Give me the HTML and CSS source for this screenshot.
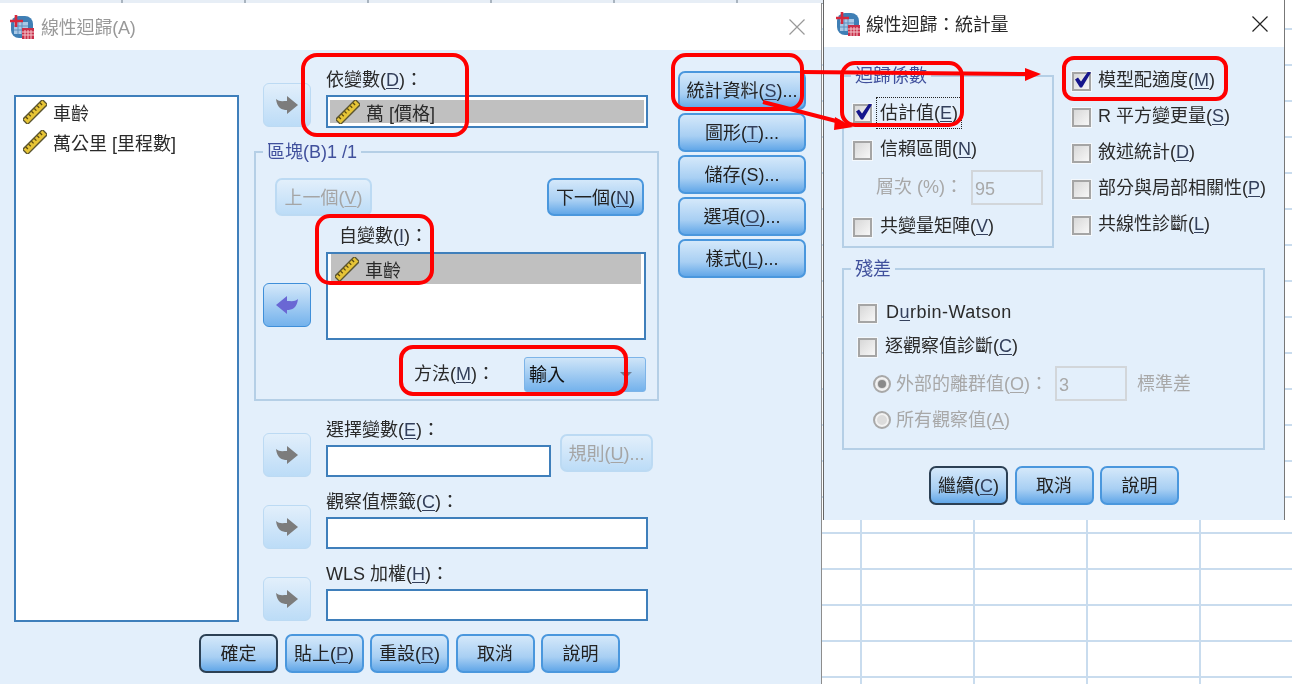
FILE: index.html
```html
<!DOCTYPE html>
<html lang="zh-Hant">
<head>
  <meta charset="UTF-8" />
  <title>線性迴歸</title>
  <link rel="stylesheet" href="styles.css">
</head>
<body>

  <svg width="0" height="0" class="defs">
    <defs>
      <symbol id="ruler" viewBox="0 0 24 24">
        <g transform="rotate(-45 12 12)">
          <rect x="-2" y="8.5" width="28" height="7" fill="#e6c436" stroke="#5b5530" stroke-width="1.4" />
          <path d="M2 9v3M6 9v3M10 9v3M14 9v3M18 9v3M22 9v3" stroke="#5b4a10" stroke-width="1.3" />
        </g>
      </symbol>
      <symbol id="app" viewBox="0 0 24 24">
        <rect x="1" y="1" width="22" height="22" rx="8" fill="#3f7fb5" />
        <rect x="4" y="7" width="14" height="12" fill="#a9c8e6" />
        <path d="M8 7v12M12 7v12M4 11h14M4 15h14" stroke="#5f8fbe" />
        <path d="M0 6h13M6 0v12" stroke="#d8283c" stroke-width="2.6" />
        <rect x="12" y="13" width="12" height="11" fill="#c9304a" />
        <path d="M15 15v9M18 15v9M21 15v9M12 17h12M12 20h12" stroke="#f3c6cc" />
      </symbol>
      <symbol id="arrow" viewBox="0 0 22 18">
        <path d="M0 3C3 6 7 5 11 5V0L22 9 11 18V14C6 14 1 12 0 3Z" />
      </symbol>
      <symbol id="x" viewBox="0 0 16 16">
        <path d="M.5 .5L15.5 15.5M15.5 .5L.5 15.5" fill="none" stroke="currentColor" stroke-width="1.2" />
      </symbol>
    </defs>
  </svg>

  <div class="desktop">
    <div class="sheet-strip"></div>

    <!-- 線性迴歸 主視窗 -->
    <section class="window window-main">
      <header class="titlebar">
        <svg class="app-icon"><use href="#app" /></svg>
        <span class="title title-off">線性迴歸(A)</span>
        <svg class="close close-off"><use href="#x" /></svg>
      </header>

      <div class="window-body">
        <div class="main-row">
          <div class="listbox source-list">
            <div class="list-item"><svg class="ruler"><use href="#ruler" /></svg>車齡</div>
            <div class="list-item"><svg class="ruler"><use href="#ruler" /></svg>萬公里 [里程數]</div>
          </div>

          <div class="center-col">
            <div class="var-row dep-row">
              <button class="arrow-btn off"><svg class="arrow"><use href="#arrow" /></svg></button>
              <div class="field">
                <div class="field-label">依變數(<u>D</u>)：</div>
                <div class="input dep-input">
                  <div class="list-item selected"><svg class="ruler"><use href="#ruler" /></svg>萬 [價格]</div>
                </div>
              </div>
            </div>

            <fieldset class="group block">
              <legend>區塊(B)1 /1</legend>
              <div class="block-nav">
                <button class="btn nav-btn off">上一個(<u>V</u>)</button>
                <button class="btn nav-btn">下一個(<u>N</u>)</button>
              </div>
              <div class="var-row indep-row">
                <button class="arrow-btn left"><svg class="arrow flip"><use href="#arrow" /></svg></button>
                <div class="field">
                  <div class="field-label indent">自變數(<u>I</u>)：</div>
                  <div class="listbox indep-list">
                    <div class="list-item selected"><svg class="ruler"><use href="#ruler" /></svg>車齡</div>
                  </div>
                </div>
              </div>
              <div class="method-row">
                <span class="method-label">方法(<u>M</u>)：</span>
                <div class="select">輸入<span class="caret"></span></div>
              </div>
            </fieldset>

            <div class="var-row sel-row">
              <button class="arrow-btn off"><svg class="arrow"><use href="#arrow" /></svg></button>
              <div class="field narrow">
                <div class="field-label">選擇變數(<u>E</u>)：</div>
                <div class="input"></div>
              </div>
              <button class="btn rule-btn off">規則(<u>U</u>)...</button>
            </div>
            <div class="var-row next-row">
              <button class="arrow-btn off"><svg class="arrow"><use href="#arrow" /></svg></button>
              <div class="field">
                <div class="field-label">觀察值標籤(<u>C</u>)：</div>
                <div class="input"></div>
              </div>
            </div>
            <div class="var-row next-row">
              <button class="arrow-btn off"><svg class="arrow"><use href="#arrow" /></svg></button>
              <div class="field">
                <div class="field-label">WLS 加權(<u>H</u>)：</div>
                <div class="input"></div>
              </div>
            </div>
          </div>

          <div class="side-col">
            <button class="btn side-btn">統計資料(<u>S</u>)...</button>
            <button class="btn side-btn">圖形(<u>T</u>)...</button>
            <button class="btn side-btn">儲存(S)...</button>
            <button class="btn side-btn">選項(<u>O</u>)...</button>
            <button class="btn side-btn">樣式(<u>L</u>)...</button>
          </div>
        </div>

        <div class="footer footer-main">
          <button class="btn default">確定</button>
          <button class="btn">貼上(<u>P</u>)</button>
          <button class="btn">重設(<u>R</u>)</button>
          <button class="btn">取消</button>
          <button class="btn">說明</button>
        </div>
      </div>
    </section>

    <!-- 統計量 對話框 -->
    <section class="window window-stats">
      <header class="titlebar stats-title">
        <svg class="app-icon"><use href="#app" /></svg>
        <span class="title">線性迴歸：統計量</span>
        <svg class="close"><use href="#x" /></svg>
      </header>

      <div class="window-body stats-body">
        <div class="stats-top">
          <fieldset class="group coef">
            <legend>迴歸係數</legend>
            <div class="check-row first">
              <span class="checkbox checked"></span><span class="check-text focus">估計值(<u>E</u>)</span>
            </div>
            <div class="check-row">
              <span class="checkbox"></span><span class="check-text">信賴區間(<u>N</u>)</span>
            </div>
            <div class="level-row disabled">
              <span class="level-label">層次 (%)：</span>
              <div class="num-input">95</div>
            </div>
            <div class="check-row">
              <span class="checkbox"></span><span class="check-text">共變量矩陣(<u>V</u>)</span>
            </div>
          </fieldset>

          <div class="fit-col">
            <div class="fit-row"><span class="checkbox checked"></span><span class="check-text">模型配適度(<u>M</u>)</span></div>
            <div class="fit-row"><span class="checkbox"></span><span class="check-text">R 平方變更量(<u>S</u>)</span></div>
            <div class="fit-row"><span class="checkbox"></span><span class="check-text">敘述統計(<u>D</u>)</span></div>
            <div class="fit-row"><span class="checkbox"></span><span class="check-text">部分與局部相關性(<u>P</u>)</span></div>
            <div class="fit-row"><span class="checkbox"></span><span class="check-text">共線性診斷(<u>L</u>)</span></div>
          </div>
        </div>

        <fieldset class="group resid">
          <legend>殘差</legend>
          <div class="check-row first-resid">
            <span class="checkbox"></span><span class="check-text dw">D<u>u</u>rbin-Watson</span>
          </div>
          <div class="check-row">
            <span class="checkbox"></span><span class="check-text">逐觀察值診斷(<u>C</u>)</span>
          </div>
          <div class="radio-row disabled tall">
            <span class="radio on"></span><span class="radio-text">外部的離群值(<u>O</u>)：</span>
            <div class="num-input">3</div>
            <span class="unit">標準差</span>
          </div>
          <div class="radio-row disabled">
            <span class="radio"></span><span class="radio-text">所有觀察值(<u>A</u>)</span>
          </div>
        </fieldset>

        <div class="footer footer-stats">
          <button class="btn default">繼續(<u>C</u>)</button>
          <button class="btn">取消</button>
          <button class="btn">說明</button>
        </div>
      </div>
    </section>

    <!-- 紅色標註 -->
    <svg class="marks" viewBox="0 0 1292 684">
      <g fill="none" stroke="#f00" stroke-width="4">
        <rect x="303" y="55" width="164" height="80" rx="14" />
        <rect x="317" y="216" width="115" height="67" rx="13" />
        <rect x="401" y="347" width="225" height="47" rx="12" />
        <rect x="673" y="55" width="129" height="54" rx="13" />
        <rect x="842" y="63" width="120" height="62" rx="13" />
        <rect x="1064" y="58" width="162" height="41" rx="10" />
        <path d="M802 72L1028 74M763 102L840 122" />
      </g>
      <path d="M1025 68L1041 74 1025 81ZM835 117L853 127 834 130Z" fill="#f00" />
    </svg>
  </div>

</body>
</html>
```

FILE: styles.css
```css
* {
  box-sizing: border-box;
}

body {
  margin: 0;
  overflow: hidden;
  font-family: "Liberation Sans", "Noto Sans CJK TC", sans-serif;
  font-size: 18px;
  color: #2a2a2a;
}

.defs {
  position: absolute;
}

u {
  text-underline-offset: 2px;
  color: #34405c;
}

/* 桌面與工作表格線 */
.desktop {
  position: relative;
  width: 1292px;
  height: 684px;
  overflow: hidden;
  filter: blur(0.35px);
  background-color: #fff;
  background-image:
    repeating-linear-gradient(180deg, transparent 0 34px, #c9dcee 34px 36px),
    repeating-linear-gradient(90deg, transparent 0 111px, #c9dcee 111px 113px);
  background-position: 0 -6px, 71px 0;
}

.sheet-strip {
  position: absolute;
  left: 0;
  top: 0;
  width: 824px;
  height: 4px;
  background-color: #e7eef6;
  background-image: repeating-linear-gradient(90deg, transparent 0 121px, #a9b4bf 121px 123px);
  border-bottom: 1px solid #9aa4ae;
}

.window {
  position: absolute;
  background-color: #e3effb;
}

.window-main {
  left: 0;
  top: 3px;
  width: 822px;
  height: 681px;
  border-right: 1px solid #8d8d8d;
}

.window-stats {
  left: 823px;
  top: 0;
  width: 462px;
  height: 520px;
  border-left: 1px solid #666;
  border-right: 1px solid #777;
}

.titlebar {
  display: flex;
  align-items: center;
  height: 47px;
  padding-left: 10px;
  background-color: #fff;
}

.stats-title {
  padding-left: 12px;
}

.stats-title .app-icon {
  margin-right: 6px;
}

.app-icon {
  width: 24px;
  height: 24px;
  margin-right: 7px;
}

.title {
  flex: 1;
  padding-bottom: 2px;
  letter-spacing: -0.2px;
}

.title-off {
  color: #999;
}

.close {
  width: 16px;
  height: 16px;
  margin-right: 16px;
  color: #222;
}

.close-off {
  color: #999;
}

/* 按鈕 */
.btn {
  width: 79px;
  height: 39px;
  padding: 0 0 3px;
  font: inherit;
  color: #222;
  white-space: nowrap;
  border: 2px solid #4a97dd;
  border-radius: 7px;
  background: linear-gradient(#d4e8fa, #a8cff3 60%, #62a7e8);
}

.btn.off {
  color: #a5a5a5;
  border-color: #bcdaf3;
  background: linear-gradient(#e2effb, #bcdcf7);
}

.btn.off u {
  color: #a5a5a5;
}

.btn.default {
  border-color: #2c4054;
}

.footer {
  display: flex;
  gap: 6.5px;
}

.footer-main {
  padding-left: 199px;
}

/* 主視窗 */
.main-row {
  display: flex;
  height: 584px;
  padding-left: 14px;
}

.listbox,
.input {
  background-color: #fff;
  border: 2px solid #3f7fbb;
}

.source-list {
  width: 225px;
  height: 527px;
  margin-top: 45px;
}

.list-item {
  display: flex;
  align-items: center;
  height: 30px;
  padding-left: 7px;
  white-space: nowrap;
}

.list-item.selected {
  background-color: #c0c0c0;
}

.ruler {
  width: 24px;
  height: 24px;
  margin-right: 6px;
}

.center-col {
  width: 405px;
  margin-left: 15px;
  padding-top: 17px;
}

.var-row {
  display: flex;
  align-items: flex-end;
  padding-left: 9px;
}

.field {
  width: 322px;
  margin-left: 15px;
}

.field.narrow {
  width: 225px;
}

.field-label {
  height: 24px;
  line-height: 26px;
  margin-bottom: 4px;
}

.field-label.indent {
  padding-left: 13px;
  line-height: 24px;
}

.input {
  height: 32px;
}

.dep-input {
  height: 33px;
  padding: 3px 2px;
}

.dep-input .list-item {
  height: 23px;
  padding-left: 6px;
}

.arrow-btn {
  flex: none;
  display: flex;
  align-items: center;
  justify-content: center;
  width: 48px;
  height: 44px;
  padding: 0;
  border: 1px solid #3f8fd9;
  border-radius: 6px;
  background: linear-gradient(#d4e8fa, #74b2ec);
  fill: #6a67d4;
}

.arrow-btn.off {
  border-color: #bcdaf3;
  background: linear-gradient(#e2effb, #bcdcf7);
  fill: #7c7c7c;
}

.arrow {
  width: 22px;
  height: 18px;
}

.arrow.flip {
  transform: scaleX(-1);
}

.dep-row .arrow-btn {
  margin-bottom: 1px;
}

/* 群組框 */
.group {
  min-width: 0;
  margin: 0;
  padding: 0;
  border: 2px solid #b5cfe6;
}

.group legend {
  height: 24px;
  line-height: 24px;
  margin-left: 7px;
  padding: 0 4px;
  color: #40509c;
}

.block {
  margin-top: 12px;
  padding-bottom: 7px;
}

.block-nav {
  display: flex;
  justify-content: space-between;
  margin-top: 14px;
  padding: 0 13px 0 19px;
}

.nav-btn {
  width: 97px;
  height: 38px;
}

.indep-row {
  margin-top: 8px;
  padding-left: 7px;
}

.indep-row .arrow-btn {
  margin-bottom: 13px;
}

.indep-list {
  width: 320px;
  height: 88px;
  padding: 0 3px;
}

.indep-list .list-item {
  padding-left: 4px;
}

.method-row {
  display: flex;
  justify-content: flex-end;
  align-items: center;
  margin-top: 17px;
  padding-right: 11px;
}

.method-label {
  width: 110px;
  padding-bottom: 5px;
}

.select {
  position: relative;
  display: flex;
  align-items: center;
  width: 122px;
  height: 35px;
  padding: 0 0 4px 4px;
  color: #111;
  border: 1px solid #7db4e8;
  border-radius: 3px;
  background: linear-gradient(#cfe5f8, #74b2ec);
}

.caret {
  position: absolute;
  right: 13px;
  top: 14px;
  border-left: 6px solid transparent;
  border-right: 6px solid transparent;
  border-top: 6px solid #6f7f93;
}

.sel-row {
  margin-top: 16px;
}

.next-row {
  margin-top: 12px;
}

.rule-btn {
  width: 93px;
  height: 38px;
  margin-left: 9px;
  margin-bottom: 5px;
}

.side-col {
  display: flex;
  flex-direction: column;
  gap: 3px;
  width: 128px;
  margin-left: 19px;
  padding-top: 21px;
}

.side-btn {
  width: 100%;
}

/* 統計量 對話框 */
.stats-body {
  padding-left: 18px;
}

.stats-top {
  display: flex;
  align-items: flex-start;
}

.coef {
  width: 212px;
  margin-top: 17px;
}

.check-row {
  display: flex;
  align-items: center;
  height: 32px;
  margin-top: 5px;
  padding-left: 9px;
}

.check-row.first {
  margin-top: 9px;
}

.coef .check-row:last-child {
  margin-top: 6px;
  margin-bottom: 3px;
}

.checkbox {
  position: relative;
  flex: none;
  width: 19px;
  height: 19px;
  border: 2px solid #a5a5a5;
  background: linear-gradient(135deg, #d8d8d8, #f7f7f7);
  box-shadow: 0 0 0 1px #f4f8fc;
}

.checkbox.checked::after {
  content: "";
  position: absolute;
  left: -1px;
  top: -2px;
  width: 18px;
  height: 17px;
  background: #16168c;
  clip-path: polygon(2px 8px, 5px 6px, 8px 10px, 15px 0, 18px 1px, 9px 16px, 7px 16px);
}

.check-text {
  height: 32px;
  line-height: 29px;
  margin-left: 4px;
  padding: 0 3px;
  border: 1px dotted transparent;
  white-space: nowrap;
}

.check-text.focus {
  border-color: #222;
  line-height: 30px;
}

.check-text.dw {
  margin-left: 5px;
  letter-spacing: 0.5px;
}

.level-row {
  display: flex;
  align-items: center;
  margin-top: 4px;
  padding-left: 32px;
}

.level-label {
  width: 95px;
  padding-bottom: 5px;
}

.disabled {
  color: #a8a8a8;
}

.disabled u {
  color: #a8a8a8;
}

.num-input {
  width: 72px;
  height: 35px;
  padding-left: 2px;
  line-height: 34px;
  border: 2px solid #d2d6da;
}

.fit-col {
  margin-left: 18px;
  padding-top: 22px;
}

.fit-row {
  display: flex;
  align-items: center;
  height: 24px;
  margin-bottom: 12px;
}

.fit-row .check-text {
  height: 24px;
  line-height: 21px;
  margin-left: 3px;
}

.resid {
  width: 423px;
  margin-top: 8px;
}

.resid .check-row {
  padding-left: 14px;
  margin-top: 2px;
}

.resid .check-row.first-resid {
  margin-top: 16px;
}

.radio-row {
  display: flex;
  align-items: center;
  height: 32px;
  margin-top: 3px;
  padding-left: 29px;
}

.radio-row.tall {
  height: 35px;
}

.radio-row:last-child {
  margin-bottom: 12px;
}

.radio {
  flex: none;
  position: relative;
  width: 18px;
  height: 18px;
  border: 2px solid #a8a8a8;
  border-radius: 50%;
  background: #dcdcdc;
  box-shadow: inset 0 0 0 2px #f2f2f2;
}

.radio.on::after {
  content: "";
  position: absolute;
  left: 3px;
  top: 3px;
  width: 8px;
  height: 8px;
  border-radius: 50%;
  background: #8a8a8a;
}

.radio-text {
  width: 159px;
  margin-left: 5px;
  padding-bottom: 4px;
  white-space: nowrap;
}

.unit {
  margin-left: 10px;
  padding-bottom: 4px;
}

.footer-stats {
  margin-top: 16px;
  padding-left: 87px;
}

/* 標註層 */
.marks {
  position: absolute;
  left: 0;
  top: 0;
  width: 1292px;
  height: 684px;
  pointer-events: none;
}
```
